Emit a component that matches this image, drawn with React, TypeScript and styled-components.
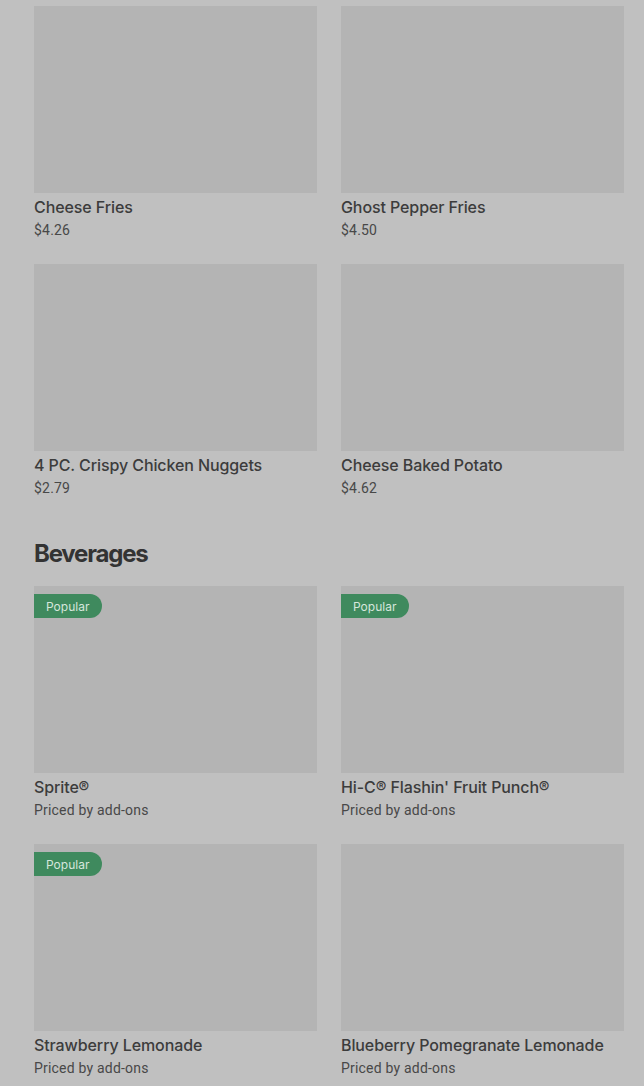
import React from "react";
import styled, { createGlobalStyle } from "styled-components";

const GlobalStyle = createGlobalStyle`
  html, body {
    margin: 0;
    padding: 0;
    background: #c0c0c0;
  }
  body {
    font-family: Roboto, "Liberation Sans", Arial, sans-serif;
  }
`;

interface MenuItem {
  name: string;
  price: string;
  popular?: boolean;
}

const sides: MenuItem[] = [
  { name: "Cheese Fries", price: "$4.26" },
  { name: "Ghost Pepper Fries", price: "$4.50" },
  { name: "4 PC. Crispy Chicken Nuggets", price: "$2.79" },
  { name: "Cheese Baked Potato", price: "$4.62" },
];

const beverages: MenuItem[] = [
  { name: "Sprite®", price: "Priced by add-ons", popular: true },
  { name: "Hi-C® Flashin' Fruit Punch®", price: "Priced by add-ons", popular: true },
  { name: "Strawberry Lemonade", price: "Priced by add-ons", popular: true },
  { name: "Blueberry Pomegranate Lemonade", price: "Priced by add-ons" },
];

const Page = styled.div`
  padding: 6px 20px 0 34px;
  min-height: 1086px;
  box-sizing: border-box;
  background: #c0c0c0;
`;

const Grid = styled.div`
  display: grid;
  grid-template-columns: 283px 283px;
  column-gap: 24px;
  row-gap: 24px;
`;

const Card = styled.div`
  display: flex;
  flex-direction: column;
  height: 234px;
`;

const Thumb = styled.div`
  position: relative;
  height: 187px;
  background: #b4b4b4;
`;

const Badge = styled.span`
  position: absolute;
  top: 8px;
  left: 0;
  height: 24px;
  padding: 0 13px 0 12px;
  display: flex;
  align-items: center;
  background: #3f8a5e;
  color: #d6e6dc;
  font-family: Inter, Roboto, sans-serif;
  font-size: 12px;
  border-radius: 0 12px 12px 0;
`;

const Title = styled.div`
  margin-top: 4px;
  font-family: Inter, Roboto, sans-serif;
  font-size: 16px;
  line-height: 20px;
  font-weight: 500;
  letter-spacing: -0.1px;
  color: #3c3c3c;
  white-space: nowrap;
`;

const Price = styled.div`
  margin-top: 3px;
  font-size: 14px;
  line-height: 20px;
  letter-spacing: 0.2px;
  color: #484848;
`;

const Heading = styled.h2`
  margin: 40px 0 16px;
  font-family: Inter, Roboto, sans-serif;
  font-size: 24px;
  line-height: 32px;
  font-weight: 700;
  letter-spacing: -1.2px;
  color: #333;
`;

const ItemCard = ({ item }: { item: MenuItem }) => (
  <Card>
    <Thumb>{item.popular && <Badge>Popular</Badge>}</Thumb>
    <Title>{item.name}</Title>
    <Price>{item.price}</Price>
  </Card>
);

const App = () => (
  <>
    <GlobalStyle />
    <Page>
      <Grid>
        {sides.map((item) => (
          <ItemCard key={item.name} item={item} />
        ))}
      </Grid>
      <Heading>Beverages</Heading>
      <Grid>
        {beverages.map((item) => (
          <ItemCard key={item.name} item={item} />
        ))}
      </Grid>
    </Page>
  </>
);

export default App;
